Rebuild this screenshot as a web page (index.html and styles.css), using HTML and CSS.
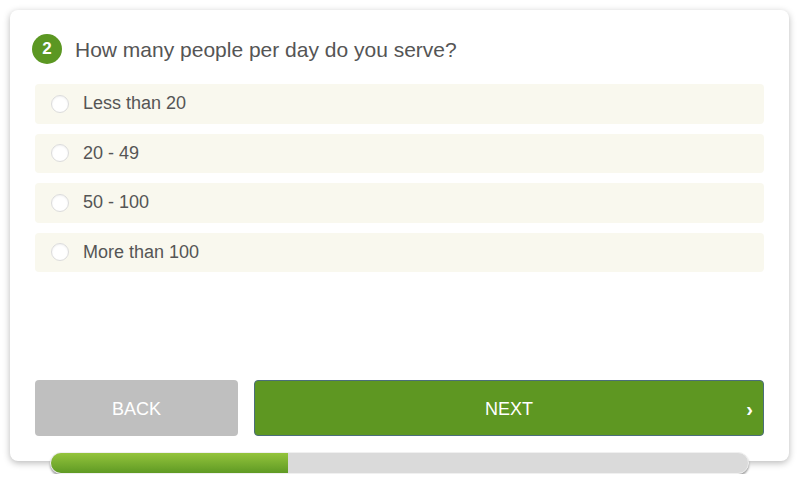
FILE: index.html
```html
<!DOCTYPE html>
<html lang="en">
<head>
<meta charset="utf-8">
<title>Survey</title>
<link rel="stylesheet" href="styles.css">
</head>
<body>
<div class="wrap">
  <div class="card">
    <div class="question">
      <span class="badge">2</span>
      <span class="qtext">How many people per day do you serve?</span>
    </div>
    <div class="options">
      <label class="option"><span class="radio"></span><span>Less than 20</span></label>
      <label class="option"><span class="radio"></span><span>20 - 49</span></label>
      <label class="option"><span class="radio"></span><span>50 - 100</span></label>
      <label class="option"><span class="radio"></span><span>More than 100</span></label>
    </div>
    <div class="actions">
      <button class="btn back">BACK</button>
      <button class="btn next"><span>NEXT</span><span class="chev">›</span></button>
    </div>
  </div>
  <div class="progress"><div class="fill" style="width:34%"></div></div>
</div>
</body>
</html>
```
FILE: styles.css
```css
* { box-sizing: border-box; }
html, body { margin: 0; background: #fff; }
body { padding: 10px 11px 0 10px; font-family: "Liberation Sans", Arial, sans-serif; color: #555; }
.wrap { width: 779px; }
.card {
  height: 451px;
  background: #fff;
  border-radius: 8px;
  box-shadow: 0 2px 7px rgba(0,0,0,0.28);
  padding: 24px 25px 25px 22px;
  display: flex;
  flex-direction: column;
}
.question { display: flex; align-items: center; height: 30px; }
.badge {
  width: 30px; height: 30px; border-radius: 50%;
  background: #5b9722; color: #fff;
  display: flex; align-items: center; justify-content: center;
  font-size: 17px; font-weight: bold;
}
.qtext { margin-left: 13px; font-size: 21px; color: #555; padding-top: 2px; }
.options { margin-top: 20px; margin-left: 3px; display: flex; flex-direction: column; gap: 10px; }
.option {
  height: 39.5px; background: #f9f8ee; border-radius: 4px;
  display: flex; align-items: center; padding-left: 16px;
  font-size: 18px; color: #555;
}
.radio {
  width: 18px; height: 18px; border-radius: 50%;
  background: #fff; border: 1px solid #dcdcdc;
  box-shadow: inset 0 1px 2px rgba(0,0,0,0.06);
  margin-right: 14px; flex: none;
}
.actions { margin-top: auto; margin-left: 3px; display: flex; gap: 16px; height: 56px; }
.btn {
  font-family: "Liberation Sans", Arial, sans-serif;
  font-size: 18px; color: #fff; border-radius: 4px; cursor: pointer;
  padding: 3px 0 0;
}
.back { width: 203px; background: #bfbfbf; border: none; }
.next {
  flex: 1; background: #5e9722; border: 1px solid #4b6e7a;
  position: relative; display: flex; align-items: center; justify-content: center;
}
.chev { position: absolute; right: 10px; top: 50%; transform: translateY(-45%); font-weight: bold; font-size: 20px; }
.progress {
  position: relative;
  margin: -9px 0 0 40px; width: 699px; height: 22px;
  background: #dadada; border: 1px solid #f0f0f0; border-radius: 11px;
  box-shadow: 0 2px 2px rgba(0,0,0,0.35);
  overflow: hidden;
}
.fill { height: 100%; background: linear-gradient(#94c43c, #5f9a24); }
```
